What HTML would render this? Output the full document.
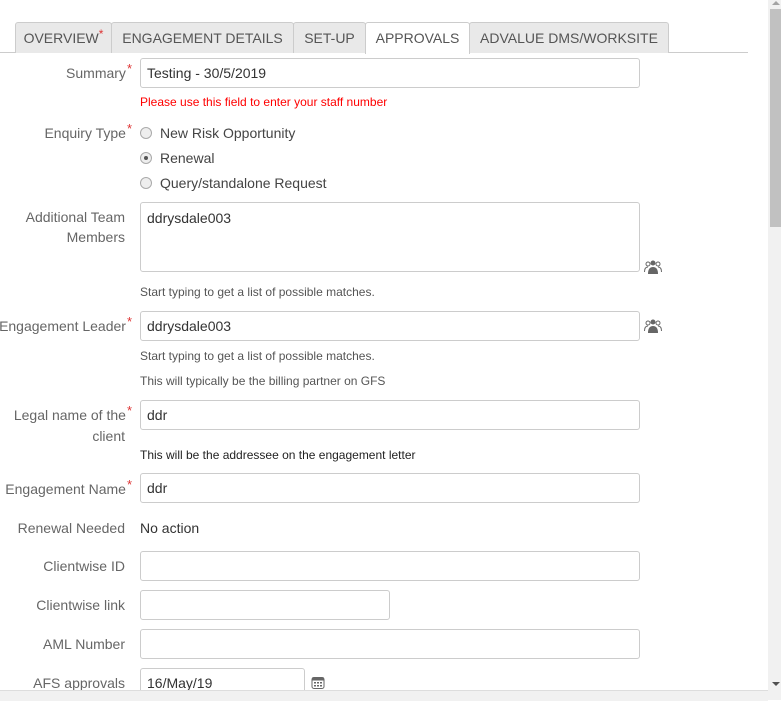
<!DOCTYPE html>
<html><head><meta charset="utf-8"><style>
body{margin:0;width:781px;height:700px;overflow:hidden;background:#fff;font-family:"Liberation Sans",Arial,sans-serif;position:relative}
.a{position:absolute}
.tab{position:absolute;top:22px;background:#e9e9e9;border:1px solid #ccc;border-bottom:none;border-radius:3px 3px 0 0;font-size:14px;color:#555;line-height:31px;text-align:center;box-sizing:border-box;height:31px}
.lbl{position:absolute;right:656px;font-size:14px;color:#666;text-align:right;line-height:20px;white-space:nowrap}
.req{color:#d33;font-size:13px;position:relative;top:-5px;margin-left:1px;margin-right:-7px}
.in{position:absolute;left:140px;width:500px;height:30px;border:1px solid #ccc;border-radius:3px;box-sizing:border-box;font-size:14px;color:#333;padding-left:6px;line-height:28px;background:#fff}
.help{position:absolute;left:140px;font-size:12px;color:#555}
.rad{position:absolute;left:140px;width:12px;height:12px;border:1px solid #aaa;border-radius:50%;background:#eee;box-sizing:border-box}
.rt{position:absolute;left:160px;font-size:14px;color:#444}
</style></head><body>
<div class="a" style="left:0;top:52px;width:748px;height:1px;background:#ccc"></div>
<div class="tab" style="left:15px;width:97px">OVERVIEW<span style="color:#d33;font-size:12px;position:relative;top:-5px">*</span></div>
<div class="tab" style="left:111px;width:183px">ENGAGEMENT DETAILS</div>
<div class="tab" style="left:293px;width:73px">SET-UP</div>
<div class="tab" style="left:365px;width:105px;background:#fff;height:32px">APPROVALS</div>
<div class="tab" style="left:469px;width:200px">ADVALUE DMS/WORKSITE</div>

<div class="lbl" style="top:63px">Summary<span class="req">*</span></div>
<div class="in" style="top:58px">Testing - 30/5/2019</div>
<div class="help" style="top:95px;color:#f00">Please use this field to enter your staff number</div>

<div class="lbl" style="top:123px">Enquiry Type<span class="req">*</span></div>
<div class="rad" style="top:127px"></div><div class="rt" style="top:125px">New Risk Opportunity</div>
<div class="rad" style="top:152px"><div class="a" style="left:3px;top:3px;width:4px;height:4px;border-radius:50%;background:#555"></div></div><div class="rt" style="top:150px">Renewal</div>
<div class="rad" style="top:177px"></div><div class="rt" style="top:175px">Query/standalone Request</div>

<div class="lbl" style="top:207px">Additional Team<br>Members</div>
<div class="in" style="top:202px;height:70px;line-height:30px">ddrysdale003</div>
<svg class="a" style="left:644px;top:260px" width="18" height="14" viewBox="0 0 18 14"><g fill="#666"><circle cx="9" cy="3" r="2.5"/><path d="M4 14 Q4 7 9 7 Q14 7 14 14Z"/><circle cx="4" cy="4" r="2" fill="none" stroke="#666"/><circle cx="14" cy="4" r="2" fill="none" stroke="#666"/><path d="M0.5 12 Q0.5 7 4 7 M17.5 12 Q17.5 7 14 7" fill="none" stroke="#666"/></g></svg>
<div class="help" style="top:285px">Start typing to get a list of possible matches.</div>

<div class="lbl" style="top:316px">Engagement Leader<span class="req">*</span></div>
<div class="in" style="top:311px">ddrysdale003</div>
<svg class="a" style="left:644px;top:319px" width="18" height="14" viewBox="0 0 18 14"><g fill="#666"><circle cx="9" cy="3" r="2.5"/><path d="M4 14 Q4 7 9 7 Q14 7 14 14Z"/><circle cx="4" cy="4" r="2" fill="none" stroke="#666"/><circle cx="14" cy="4" r="2" fill="none" stroke="#666"/><path d="M0.5 12 Q0.5 7 4 7 M17.5 12 Q17.5 7 14 7" fill="none" stroke="#666"/></g></svg>
<div class="help" style="top:349px">Start typing to get a list of possible matches.</div>
<div class="help" style="top:374px">This will typically be the billing partner on GFS</div>

<div class="lbl" style="top:405px">Legal name of the<span class="req">*</span><br>client</div>
<div class="in" style="top:400px">ddr</div>
<div class="help" style="top:448px;color:#222">This will be the addressee on the engagement letter</div>

<div class="lbl" style="top:479px">Engagement Name<span class="req">*</span></div>
<div class="in" style="top:473px">ddr</div>

<div class="lbl" style="top:518px">Renewal Needed</div>
<div class="a" style="left:140px;top:518px;font-size:14px;color:#333;line-height:20px">No action</div>

<div class="lbl" style="top:556px">Clientwise ID</div>
<div class="in" style="top:551px"></div>
<div class="lbl" style="top:595px">Clientwise link</div>
<div class="in" style="top:590px;width:250px"></div>
<div class="lbl" style="top:634px">AML Number</div>
<div class="in" style="top:629px"></div>
<div class="lbl" style="top:673px">AFS approvals</div>
<div class="in" style="top:668px;width:165px">16/May/19</div>
<svg class="a" style="left:311px;top:676px" width="14" height="13" viewBox="0 0 14 13"><rect x="1" y="1.5" width="12" height="11" rx="2" fill="none" stroke="#666"/><rect x="1" y="1.5" width="12" height="3" fill="#666"/><g fill="#666"><rect x="3" y="6" width="2" height="1.5"/><rect x="6" y="6" width="2" height="1.5"/><rect x="9" y="6" width="2" height="1.5"/><rect x="3" y="9" width="2" height="1.5"/><rect x="6" y="9" width="2" height="1.5"/><rect x="9" y="9" width="2" height="1.5"/></g></svg>

<div class="a" style="left:0;top:690px;width:768px;height:10px;background:#f1f1f1;border-top:1px solid #ddd"></div>
<div class="a" style="left:768px;top:0;width:13px;height:700px;background:#f1f1f1"></div>
<div class="a" style="left:770px;top:9px;width:11px;height:218px;background:#c1c1c1"></div>
<div class="a" style="left:772px;top:1px;width:0;height:0;border-left:4px solid transparent;border-right:4px solid transparent;border-bottom:4px solid #a3a3a3"></div>
<div class="a" style="left:772px;top:682px;width:0;height:0;border-left:4px solid transparent;border-right:4px solid transparent;border-top:4px solid #505050"></div>
</body></html>
